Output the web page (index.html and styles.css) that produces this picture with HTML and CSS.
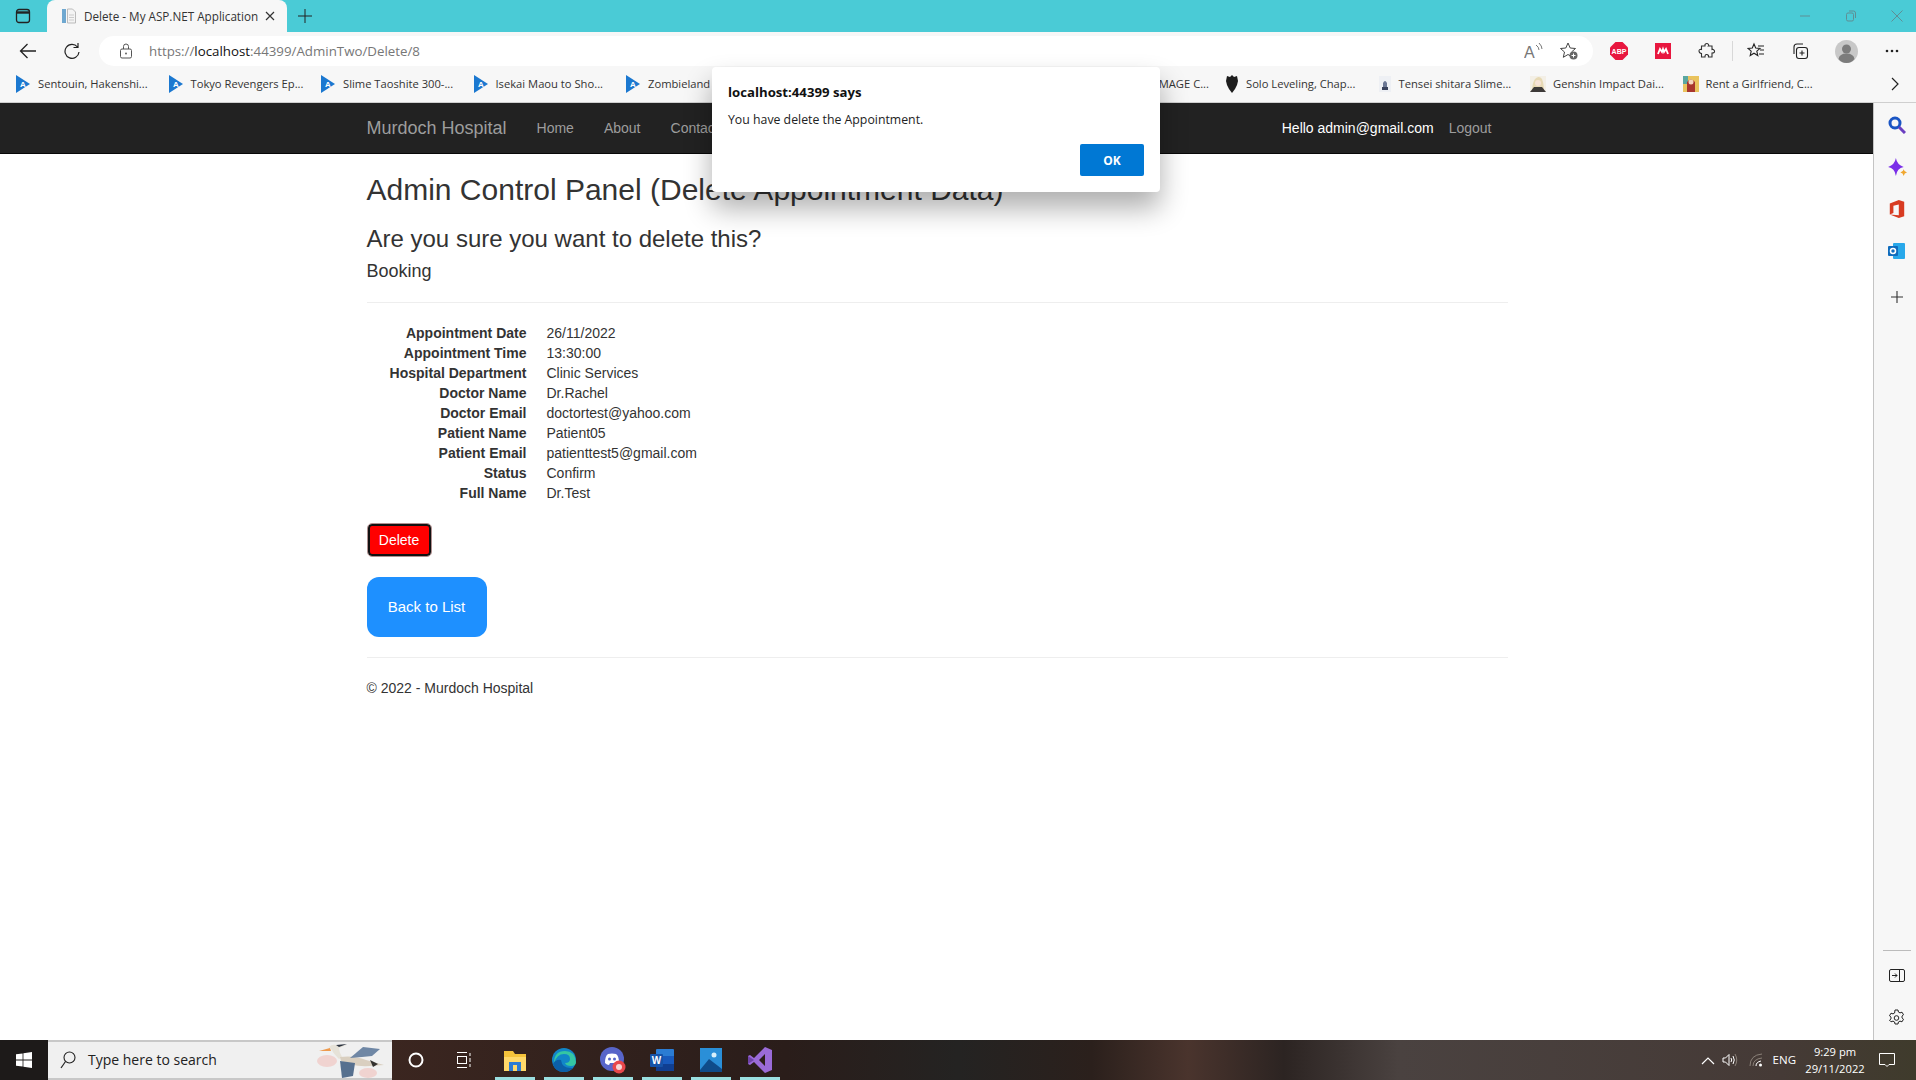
FILE: index.html
```html
<!DOCTYPE html>
<html>
<head>
  <title>Delete - My ASP.NET Application</title>
  <link rel="stylesheet" href="styles.css">
</head>
<body>
  <!-- browser chrome -->
  <div class="tabstrip">
    <svg class="tab-actions" width="16" height="16" viewBox="0 0 16 16"><rect x="1.500" y="1.500" width="13" height="13" rx="2.500" fill="none" stroke="#222" stroke-width="1.300"/><path d="M2 4.500h12" stroke="#222" stroke-width="2.400"/></svg>
    <div class="tab">
      <svg width="16" height="16" viewBox="0 0 16 16"><rect x="1" y="1" width="4" height="14" fill="#6fa8d0"/><path d="M6.500 1h5l3 3v11h-8z" fill="#f4f4f4" stroke="#bbb"/><path d="M8 7h5M8 9.500h5M8 12h5" stroke="#ccc"/></svg>
      <span class="tab-title">Delete - My ASP.NET Application</span>
      <svg width="10" height="10" viewBox="0 0 10 10"><path d="M1 1l8 8M9 1l-8 8" stroke="#333" stroke-width="1.200"/></svg>
    </div>
    <svg class="new-tab" width="14" height="14" viewBox="0 0 14 14"><path d="M7 0v14M0 7h14" stroke="#222" stroke-width="1"/></svg>
    <div class="window-btns">
      <svg width="12" height="12" viewBox="0 0 12 12"><path d="M1 6h10" stroke="#5f8f95"/></svg>
      <svg width="12" height="12" viewBox="0 0 12 12"><rect x="1.500" y="3" width="7" height="8" rx="1.500" fill="none" stroke="#5f8f95"/><path d="M4 1h4.500q2 0 2 2v5" fill="none" stroke="#5f8f95"/></svg>
      <svg width="12" height="12" viewBox="0 0 12 12"><path d="M.5.5l11 11M11.500.5l-11 11" stroke="#5f8f95"/></svg>
    </div>
  </div>

  <div class="toolbar">
    <svg class="tool-back" width="18" height="16" viewBox="0 0 18 16"><path d="M17 8H1.500M8.500 1l-7 7 7 7" fill="none" stroke="#222" stroke-width="1.300"/></svg>
    <svg class="tool-reload" width="16" height="18" viewBox="0 0 16 18"><path d="M13.500 5A7 7 0 1 0 15 10M14 1v4.500H9.500" fill="none" stroke="#222" stroke-width="1.200"/></svg>
    <div class="address">
      <svg width="14" height="16" viewBox="0 0 14 16"><rect x="1.500" y="6" width="11" height="9" rx="1.500" fill="none" stroke="#555"/><path d="M4.500 6V3.500a2.500 2.500 0 0 1 5 0V6" fill="none" stroke="#555"/><circle cx="7" cy="10.500" r=".9" fill="#555"/></svg>
      <span class="url">https://<b>localhost</b>:44399/AdminTwo/Delete/8</span>
      <svg class="addr-read" width="20" height="18" viewBox="0 0 20 18"><text x="0" y="16" class="read-a">A</text><path d="M12 3q3 2 3 5M15 1q3 3 3 6" fill="none" stroke="#777"/></svg>
      <svg class="addr-fav" width="20" height="20" viewBox="0 0 20 20"><path d="M9 2l2.200 5 5.300.5-4 3.500 1.200 5.300L9 13.500l-4.700 2.800 1.200-5.300-4-3.500L6.800 7z" fill="none" stroke="#444"/><circle cx="14.500" cy="14.500" r="4" fill="#666"/><path d="M14.500 12.500v4M12.500 14.500h4" stroke="#fff"/></svg>
    </div>
    <svg class="tool-icon abp" width="18" height="18" viewBox="0 0 18 18"><path d="M5.500 0h7L18 5.500v7L12.500 18h-7L0 12.500v-7z" fill="#e8173f"/><text x="9" y="12" text-anchor="middle" class="abp-text">ABP</text></svg>
    <svg class="tool-icon" width="16" height="16" viewBox="0 0 16 16"><rect width="16" height="16" fill="#e8173f"/><path d="M3 11l2-5 2 3 1-3 1 3 2-3 2 5" fill="none" stroke="#fff" stroke-width="1.800"/></svg>
    <svg class="tool-icon" width="18" height="18" viewBox="0 0 18 18"><path d="M7 2.500q2-2 3.500 0 .5 1 0 1.500H14v3.500q2-.5 2.500 1.500t-2.500 2V15h-3.500q.5-2-1.500-2.500T7 15H3.500v-3.500Q1 11 1 9t2.500-1.500V4H7z" fill="none" stroke="#333" stroke-width="1.100"/></svg>
    <span class="tool-sep"></span>
    <svg class="tool-icon" width="18" height="18" viewBox="0 0 18 18"><path d="M7 2l1.700 4 4.300.4-3.200 2.800 1 4.300L7 11.200l-3.800 2.300 1-4.300L1 6.400l4.300-.4z" fill="none" stroke="#222" stroke-width="1.100"/><path d="M11 4h6M13 8h4M12 12h5" stroke="#222" stroke-width="1.100"/></svg>
    <svg class="tool-icon tool-tight" width="18" height="18" viewBox="0 0 18 18"><rect x="5.500" y="5.500" width="11" height="11" rx="2.500" fill="none" stroke="#222" stroke-width="1.100"/><path d="M3 12V5q0-3 3-3h6M11 8.500v5M8.500 11h5" fill="none" stroke="#222" stroke-width="1.100"/></svg>
    <svg class="tool-icon tool-tight" width="23" height="23" viewBox="0 0 23 23"><circle cx="11.500" cy="11.500" r="11.500" fill="#c8c8c8"/><circle cx="11.500" cy="9" r="4.500" fill="#7c7c7c"/><path d="M3.500 19q1-5.500 8-5.500t8 5.500q-3 4-8 4t-8-4z" fill="#7c7c7c"/></svg>
    <svg class="tool-icon" width="14" height="4" viewBox="0 0 14 4"><circle cx="2" cy="2" r="1.300" fill="#222"/><circle cx="7" cy="2" r="1.300" fill="#222"/><circle cx="12" cy="2" r="1.300" fill="#222"/></svg>
  </div>

  <div class="bookmarks">
    <div class="bm-item"><svg width="16" height="18" viewBox="0 0 16 18"><path d="M1 0l14 9-14 9z" fill="#1b78d0"/><text x="5" y="12" class="bm-a">A</text></svg><span>Sentouin, Hakenshi...</span></div>
    <div class="bm-item"><svg width="16" height="18" viewBox="0 0 16 18"><path d="M1 0l14 9-14 9z" fill="#1b78d0"/><text x="5" y="12" class="bm-a">A</text></svg><span>Tokyo Revengers Ep...</span></div>
    <div class="bm-item"><svg width="16" height="18" viewBox="0 0 16 18"><path d="M1 0l14 9-14 9z" fill="#1b78d0"/><text x="5" y="12" class="bm-a">A</text></svg><span>Slime Taoshite 300-...</span></div>
    <div class="bm-item"><svg width="16" height="18" viewBox="0 0 16 18"><path d="M1 0l14 9-14 9z" fill="#1b78d0"/><text x="5" y="12" class="bm-a">A</text></svg><span>Isekai Maou to Sho...</span></div>
    <div class="bm-item"><svg width="16" height="18" viewBox="0 0 16 18"><path d="M1 0l14 9-14 9z" fill="#1b78d0"/><text x="5" y="12" class="bm-a">A</text></svg><span>Zombieland</span></div>
    <div class="bm-spacer"></div>
    <div class="bm-item bm-cut"><span>MAGE C...</span></div>
    <div class="bm-item"><svg width="14" height="18" viewBox="0 0 14 18"><path d="M7 0l2 2 3-1 1 5-1 4-2 4-3 4-3-4-2-4-1-4 1-5 3 1z" fill="#1d1d1d"/></svg><span>Solo Leveling, Chap...</span></div>
    <div class="bm-item"><svg width="14" height="16" viewBox="0 0 14 16"><rect x="1" width="12" height="16" fill="#eef0f4"/><path d="M5 12V7q2-4 4 0v5z" fill="#6b7794"/><rect x="4" y="11" width="6" height="3" fill="#39425c"/></svg><span>Tensei shitara Slime...</span></div>
    <div class="bm-item"><svg width="16" height="16" viewBox="0 0 16 16"><rect width="16" height="16" fill="#f3efe6"/><path d="M2 16q0-9 3-13 4-4 7 0 2 5 2 13z" fill="#e7d9b4"/><path d="M0 16l4-5 8 0 4 5z" fill="#3d3a38"/><circle cx="8" cy="7" r="3" fill="#f7e3d6"/></svg><span>Genshin Impact Dai...</span></div>
    <div class="bm-item"><svg width="16" height="16" viewBox="0 0 16 16"><rect width="16" height="16" fill="#e9c35d"/><rect x="0" y="0" width="5" height="8" fill="#5aa7a0"/><path d="M4 16V6q4-5 8 0v10z" fill="#a8352d"/><circle cx="8" cy="6" r="2.500" fill="#f5d6bf"/></svg><span>Rent a Girlfriend, C...</span></div>
    <svg class="bm-more" width="9" height="14" viewBox="0 0 9 14"><path d="M1 1l6 6-6 6" fill="none" stroke="#222" stroke-width="1.200"/></svg>
  </div>

  <div class="browser-body">
    <div class="page">
      <nav class="navbar">
        <div class="container nav-inner">
          <a class="brand">Murdoch Hospital</a>
          <a class="nav-link">Home</a>
          <a class="nav-link">About</a>
          <a class="nav-link">Contact</a>
          <span class="nav-hello">Hello admin@gmail.com</span>
          <a class="nav-link">Logout</a>
        </div>
      </nav>

      <div class="container content">
        <h2>Admin Control Panel (Delete Appointment Data)</h2>
        <h3>Are you sure you want to delete this?</h3>
        <h4>Booking</h4>
        <hr class="rule-top">
        <dl class="details">
          <dt>Appointment Date</dt><dd>26/11/2022</dd>
          <dt>Appointment Time</dt><dd>13:30:00</dd>
          <dt>Hospital Department</dt><dd>Clinic Services</dd>
          <dt>Doctor Name</dt><dd>Dr.Rachel</dd>
          <dt>Doctor Email</dt><dd>doctortest@yahoo.com</dd>
          <dt>Patient Name</dt><dd>Patient05</dd>
          <dt>Patient Email</dt><dd>patienttest5@gmail.com</dd>
          <dt>Status</dt><dd>Confirm</dd>
          <dt>Full Name</dt><dd>Dr.Test</dd>
        </dl>
        <button class="btn-delete" type="button">Delete</button>
        <a class="btn-back">Back to List</a>
        <hr class="rule-bottom">
        <footer>© 2022 - Murdoch Hospital</footer>
      </div>
    </div>

    <aside class="sidebar">
      <svg width="18" height="18" viewBox="0 0 18 18"><circle cx="7" cy="7" r="5" fill="none" stroke="#1a55c4" stroke-width="3"/><path d="M11 11l6 6" stroke="#6a3fc0" stroke-width="3"/></svg>
      <svg class="side-spark" width="20" height="20" viewBox="0 0 18 18"><path d="M8 1q1 6 7 8-6 1-7 8-1-7-7-8 6-2 7-8z" fill="#7a2fe8"/><path d="M15 11q.5 2.500 3 3-2.500.5-3 3-.5-2.500-3-3 2.500-.5 3-3z" fill="#f0a72e"/></svg>
      <svg width="16" height="18" viewBox="0 0 16 20"><path d="M0 4l10-4 6 2v16l-6 2-10-4 10 1V5L4 6.500v8L0 16z" fill="#d83b21"/></svg>
      <svg width="18" height="18" viewBox="0 0 18 18"><rect x="5" y="1" width="12" height="16" rx="1" fill="#28a8ea"/><rect x="0" y="4" width="10" height="10" rx="1" fill="#0f6cbd"/><circle cx="5" cy="9" r="2.500" fill="none" stroke="#fff" stroke-width="1.500"/></svg>
      <svg class="side-plus" width="14" height="14" viewBox="0 0 14 14"><path d="M7 1v12M1 7h12" stroke="#333" stroke-width="1.100"/></svg>
      <span class="side-rule"></span>
      <svg width="16" height="13" viewBox="0 0 16 13"><rect x=".5" y=".5" width="15" height="12" rx="1.500" fill="none" stroke="#222"/><path d="M10.500 1v11" stroke="#222"/><path d="M3 6.500h5M6 4.500l2 2-2 2" fill="none" stroke="#222"/></svg>
      <svg class="side-gear" width="17" height="17" viewBox="0 0 17 17"><path d="M7 1h3l.4 2 1.600.9 2-.7 1.500 2.600-1.500 1.300v1.800l1.500 1.300-1.500 2.600-2-.7-1.600.9-.4 2H7l-.4-2-1.600-.9-2 .7L1.500 11.200 3 9.900V8.100L1.500 6.800 3 4.200l2 .7 1.600-.9z" fill="none" stroke="#222"/><circle cx="8.500" cy="9" r="2.300" fill="none" stroke="#222"/></svg>
    </aside>
  </div>

  <!-- windows taskbar -->
  <div class="taskbar">
    <div class="start"><svg width="16" height="16" viewBox="0 0 16 16"><path d="M0 2.300l6.600-.9v6.200H0zM7.400 1.300L16 0v7.600H7.400zM0 8.400h6.600v6.200L0 13.700zM7.400 8.400H16V16l-8.600-1.200z" fill="#fff"/></svg></div>
    <div class="search">
      <svg width="16" height="18" viewBox="0 0 16 18"><circle cx="9.500" cy="6.500" r="5.500" fill="none" stroke="#222" stroke-width="1.100"/><path d="M5.500 10.500L1 17" stroke="#222" stroke-width="1.200"/></svg>
      <span>Type here to search</span>
      <svg class="bird" width="70" height="40" viewBox="0 0 70 40">
        <ellipse cx="11" cy="21" rx="10" ry="6" fill="#f0d3d0"/><ellipse cx="52" cy="33" rx="9" ry="5" fill="#f0d3d0"/>
        <path d="M3 11l11-3 1 3z" fill="#ee9a4d"/>
        <path d="M13 7q4-4 9-1l9-1-8 3q0 4 3 9l-3 2q-6-6-7-9z" fill="#e6e2d8"/>
        <path d="M20 5l11-1-8 3z" fill="#2c3440"/>
        <path d="M24 17q14-2 26 3l18 5-14 1q-18 1-29-5z" fill="#d9cfc0"/>
        <path d="M34 18l13-11 17 2-8 7-10 1z" fill="#6f87a5"/>
        <path d="M24 21l15 2-2 13-11 2z" fill="#56708f"/>
        <path d="M54 20l8 4-5 3z" fill="#33312f"/>
      </svg>
    </div>
    <div class="task-cell"><svg width="16" height="16" viewBox="0 0 16 16"><circle cx="8" cy="8" r="6.500" fill="none" stroke="#fff" stroke-width="2"/></svg></div>
    <div class="task-cell"><svg width="16" height="16" viewBox="0 0 16 16"><path d="M1 .5h10M1 15.500h10M14 1v3M14 6v4M14 12v3" stroke="#fff"/><rect x="1.500" y="4.500" width="9" height="7" fill="none" stroke="#fff"/></svg></div>
    <div class="task-cell app first-app"><svg width="24" height="24" viewBox="0 0 24 24"><path d="M1 3h9l2 3h11v17H1z" fill="#f5c33b"/><path d="M1 9h22v14H1z" fill="#ffd96a"/><rect x="6" y="14" width="12" height="9" fill="#2b7cd3"/><rect x="10" y="17" width="4" height="6" fill="#ffd96a"/></svg></div>
    <div class="task-cell app"><svg width="26" height="26" viewBox="0 0 26 26"><circle cx="13" cy="13" r="12" fill="#1186c8"/><path d="M3 16Q3 4 14 4q10 0 11 11 0 4-5 4-5 0-6-3 5 0 5-4 0-5-6-5-7 0-10 9z" fill="#35c6a2"/><path d="M10 13q1 9 12 8-4 4-9 4-9 0-11-8 3-5 8-4z" fill="#0b5fa8"/></svg></div>
    <div class="task-cell app"><svg width="26" height="28" viewBox="0 0 26 28"><circle cx="12" cy="13" r="12" fill="#5865c9"/><path d="M5 17q0-7 3-9 4-1 8 0 3 2 3 9-2 2-4 2l-1-2h-4l-1 2q-2 0-4-2z" fill="#fff"/><circle cx="9.500" cy="13" r="1.500" fill="#5865c9"/><circle cx="14.500" cy="13" r="1.500" fill="#5865c9"/><circle cx="19" cy="21" r="6.500" fill="#e8474c"/><circle cx="19" cy="21" r="3" fill="#f7d6d6"/></svg></div>
    <div class="task-cell app"><svg width="25" height="24" viewBox="0 0 25 24"><rect x="7" y="1" width="18" height="22" rx="1" fill="#2b7cd3"/><rect x="7" y="8" width="18" height="8" fill="#185abd"/><rect x="7" y="16" width="18" height="7" fill="#103f91"/><rect x="1" y="6" width="13" height="13" rx="1" fill="#1653a8"/><text x="7.500" y="16" text-anchor="middle" class="word-w">W</text></svg></div>
    <div class="task-cell app"><svg width="24" height="24" viewBox="0 0 24 24"><rect x="1" y="0" width="22" height="24" fill="#2a8fd8"/><path d="M1 22l9-11 13 10v3H1z" fill="#0f4c8a"/><circle cx="15" cy="7" r="2.500" fill="#d7f0fb"/></svg></div>
    <div class="task-cell app"><svg width="24" height="26" viewBox="0 0 24 26"><path d="M17 0l7 3v20l-7 3-11-11-4 3-2-1V9l2-1 4 3zM17 7l-6 6 6 6z" fill="#9a6bd8" fill-rule="evenodd"/><path d="M0 9l6 4-6 4z" fill="#6f42a8"/></svg></div>
    <div class="tray">
      <svg width="14" height="9" viewBox="0 0 14 9"><path d="M1 8l6-6 6 6" fill="none" stroke="#fff" stroke-width="1.200"/></svg>
      <svg class="tray-vol" width="16" height="16" viewBox="0 0 16 16"><path d="M1 6h2.500L7 2.500v11L3.500 10H1zM9 6q1.500 2 0 4M11 4q2.500 4 0 8" fill="none" stroke="#fff"/><path d="M13 2q3.500 6 0 12" fill="none" stroke="#8a8078"/></svg>
      <svg class="tray-net" width="16" height="16" viewBox="0 0 16 16"><path d="M1 14Q1 3 13 2M4 14q0-7 9-8" fill="none" stroke="#8a8078"/><path d="M7 14q0-4 5-5" fill="none" stroke="#fff"/><circle cx="11.500" cy="13" r="1.500" fill="#fff"/></svg>
      <span class="tray-lang">ENG</span>
      <div class="clock"><span>9:29 pm</span><span>29/11/2022</span></div>
      <svg class="tray-note" width="16" height="16" viewBox="0 0 16 16"><path d="M.5 1.500h15v11H10l-2 2-2-2H.5z" fill="none" stroke="#fff"/></svg>
    </div>
  </div>

  <!-- javascript alert, lies over the page -->
  <div class="alert-box">
    <div class="alert-title">localhost:44399 says</div>
    <div class="alert-msg">You have delete the Appointment.</div>
    <button class="alert-ok" type="button">OK</button>
  </div>
</body>
</html>
```

FILE: styles.css
```css
* {
  box-sizing: border-box;
}

html,
body {
  margin: 0;
  padding: 0;
  height: 100%;
  overflow: hidden;
}

body {
  position: relative;
  display: flex;
  flex-direction: column;
  font-family: "Liberation Sans", Arial, sans-serif;
  font-size: 14px;
  line-height: 20px;
  color: #333;
  background-color: #fff;
}

svg {
  flex: none;
  display: block;
}

/* browser chrome */
.tabstrip {
  height: 32px;
  flex: none;
  display: flex;
  align-items: center;
  background-color: #4acbd6;
}

.tab-actions {
  margin-left: 15px;
}

.tab {
  width: 240px;
  height: 32px;
  margin-left: 16px;
  padding: 0 12px 0 14px;
  display: flex;
  align-items: center;
  background-color: #f7f7f7;
  border-radius: 8px 8px 0 0;
  font-family: "Open Sans", sans-serif;
  font-size: 11.7px;
  color: #333;
}

.tab-title {
  width: 186px;
  margin-left: 7px;
  white-space: nowrap;
}

.new-tab {
  margin-left: 11px;
}

.window-btns {
  margin-left: auto;
  padding-right: 13px;
  display: flex;
  gap: 34px;
}

.toolbar {
  height: 36px;
  flex: none;
  padding-top: 2px;
  display: flex;
  align-items: center;
  background-color: #f7f7f7;
}

.tool-back {
  margin-left: 19px;
}

.tool-reload {
  margin-left: 27px;
}

.address {
  width: 1494px;
  height: 30px;
  margin-left: 19px;
  padding: 0 14px 0 20px;
  display: flex;
  align-items: center;
  background-color: #fff;
  border-radius: 15px;
  font-family: "Open Sans", sans-serif;
  font-size: 13.3px;
  color: #777;
}

.url {
  margin-left: 16px;
}

.url b {
  font-weight: normal;
  color: #111;
}

.addr-read {
  margin-left: auto;
}

.addr-fav {
  margin-left: 15px;
}

.read-a {
  font-family: "Liberation Sans", sans-serif;
  font-size: 16px;
  fill: #777;
}

.tool-icon {
  margin-left: 27px;
}

.tool-tight {
  margin-left: 26px;
}

.abp {
  margin-left: 17px;
}

.abp-text {
  font-family: "Liberation Sans", sans-serif;
  font-size: 7px;
  font-weight: bold;
  fill: #fff;
}

.tool-sep {
  width: 1px;
  height: 20px;
  margin-left: 16px;
  margin-right: -13px;
  background-color: #d8d8d8;
}

.bookmarks {
  height: 35px;
  flex: none;
  padding-left: 15px;
  padding-bottom: 2px;
  display: flex;
  align-items: center;
  background-color: #f7f7f7;
  border-bottom: 1px solid #cfcfcf;
  font-family: "Open Sans", sans-serif;
  font-size: 11.2px;
  color: #333;
}

.bm-item {
  width: 152.5px;
  display: flex;
  align-items: center;
  gap: 7px;
  white-space: nowrap;
}

.bm-a {
  font-family: "Liberation Sans", sans-serif;
  font-size: 8px;
  font-weight: bold;
  fill: #fff;
}

.bm-spacer {
  flex: 1;
}

.bm-cut {
  width: 75px;
  justify-content: flex-end;
  margin-right: 16px;
}

.bm-more {
  margin: 0 16px 0 56px;
}

.browser-body {
  flex: 1;
  display: flex;
  min-height: 0;
}

/* page */
.page {
  flex: 1;
  min-width: 0;
}

.container {
  width: 1170px;
  margin: 0 auto;
  padding: 0 15px;
}

.navbar {
  height: 51px;
  background-color: #222;
  border-bottom: 1px solid #080808;
}

.nav-inner {
  height: 50px;
  display: flex;
  align-items: center;
}

.brand {
  margin-right: 15px;
  font-size: 18px;
  color: #9d9d9d;
}

.nav-link {
  padding: 0 15px;
  color: #9d9d9d;
}

.nav-hello {
  margin-left: auto;
  color: #fff;
}

.content {
  padding-right: 14px;
}

.content h2,
.content h3,
.content h4 {
  font-weight: 500;
  line-height: 1.1;
}

h2 {
  margin: 19px 0 20px;
  font-size: 30px;
}

h3 {
  margin: 0 0 10px;
  font-size: 24px;
}

h4 {
  margin: 0 0 10px;
  font-size: 18px;
}

hr {
  margin: 0;
  border: 0;
  border-top: 1px solid #eee;
}

.rule-top {
  margin-top: 20px;
}

.details {
  margin: 20px 0 21px;
  display: grid;
  grid-template-columns: 160px 1fr;
  column-gap: 20px;
}

dt {
  font-weight: bold;
  text-align: right;
}

dd {
  margin: 0;
}

.btn-delete {
  width: 63px;
  height: 32px;
  margin: 1px;
  padding: 0;
  display: block;
  background-color: #f00;
  border: 2px solid #111;
  border-radius: 4px;
  outline: 1px solid #b09090;
  outline-offset: 0;
  font-family: inherit;
  font-size: 14px;
  color: #fff;
}

.btn-back {
  width: 120px;
  height: 60px;
  margin-top: 21px;
  display: flex;
  align-items: center;
  justify-content: center;
  background-color: #1e90ff;
  border-radius: 12px;
  font-size: 15px;
  color: #fff;
}

.rule-bottom {
  margin-top: 20px;
}

footer {
  margin-top: 20px;
}

.sidebar {
  width: 43px;
  flex: none;
  padding: 13px 0 14px 3px;
  display: flex;
  flex-direction: column;
  align-items: center;
  gap: 24px;
  background-color: #f7f7f7;
  border-left: 1px solid #c4c4c4;
}

.side-spark {
  margin: -1px 0;
}

.side-plus {
  margin-top: 6px;
}

.side-rule {
  width: 28px;
  height: 1px;
  margin-top: auto;
  margin-bottom: -6px;
  background-color: #bbb;
}

.side-gear {
  margin-top: 3px;
}

/* taskbar */
.taskbar {
  height: 40px;
  flex: none;
  display: flex;
  align-items: center;
  background: linear-gradient(90deg, #3b2620 20%, #2a1d1a 41%, #242322 50%, #2b201c 57%, #4a342d 62%, #2c2422 67%, #4a4240 73%, #453a36 93%, #3f3b2c 100%);
  font-family: "Open Sans", sans-serif;
  color: #fff;
}

.start {
  width: 48px;
  height: 40px;
  display: flex;
  align-items: center;
  justify-content: center;
  background-color: #1d1a19;
}

.search {
  width: 344px;
  height: 40px;
  padding-left: 12px;
  display: flex;
  align-items: center;
  background-color: #f0f0f0;
  border: 2px solid #c8c8c8;
  border-width: 2px 0 2px 0;
  font-size: 14px;
  color: #222;
}

.search span {
  margin-left: 12px;
  white-space: nowrap;
}

.bird {
  margin-left: auto;
  margin-right: 6px;
}

.task-cell {
  width: 48px;
  height: 40px;
  display: flex;
  align-items: center;
  justify-content: center;
}

.app {
  width: 49px;
  background: linear-gradient(#9adfe0, #9adfe0) center bottom / 40px 3px no-repeat;
}

.first-app {
  margin-left: 2px;
}

.tray {
  margin-left: auto;
  display: flex;
  align-items: center;
  font-size: 11.5px;
}

.tray-vol {
  margin-left: 7px;
}

.tray-net {
  margin-left: 11px;
}

.tray-lang {
  margin-left: 8px;
}

.clock {
  width: 72px;
  margin-left: 3px;
  display: flex;
  flex-direction: column;
  align-items: center;
  font-size: 11.2px;
  line-height: 17px;
}

.tray-note {
  margin: 0 21px 0 8px;
}

.word-w {
  font-family: "Liberation Sans", sans-serif;
  font-size: 10px;
  font-weight: bold;
  fill: #fff;
}

/* alert */
.alert-box {
  position: absolute;
  left: 712px;
  top: 67px;
  width: 448px;
  height: 125px;
  padding: 15px 16px 16px;
  background-color: #fff;
  border-radius: 4px;
  box-shadow: 0 16px 28px rgba(0, 0, 0, 0.32);
  font-family: "Open Sans", sans-serif;
  color: #222;
}

.alert-title {
  font-size: 13.2px;
  font-weight: 700;
  line-height: 20px;
  color: #111;
}

.alert-msg {
  margin-top: 8px;
  font-size: 12.3px;
  line-height: 20px;
}

.alert-ok {
  position: absolute;
  right: 16px;
  bottom: 16px;
  width: 64px;
  height: 32px;
  background-color: #0078d4;
  border: 0;
  border-radius: 2px;
  font-family: inherit;
  font-size: 12px;
  font-weight: 700;
  color: #fff;
}
```
